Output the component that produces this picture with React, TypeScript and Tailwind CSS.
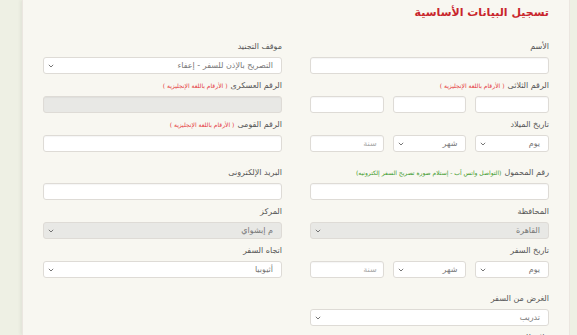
import React from "react";

const font = { fontFamily: '"DejaVu Sans", "Noto Sans", sans-serif' };

const Chevron = () => (
    <svg width="6" height="4" viewBox="0 0 6 4" className="shrink-0">
        <path d="M0.8 0.8 L3 3 L5.2 0.8" fill="none" stroke="#666" strokeWidth="0.9" />
    </svg>
);

const Label = ({ text, note, noteColor }: { text: string; note?: string; noteColor?: string }) => (
    <div className="h-[12px] leading-[12px] text-[8px] text-[#555] mb-[4px] whitespace-nowrap">
        {text}
        {note && <span className={`text-[6px] mr-[3px] ${noteColor}`}>{note}</span>}
    </div>
);

const Input = ({ placeholder, disabled }: { placeholder?: string; disabled?: boolean }) => (
    <div className={`h-[17px] rounded-[3px] border border-[#dedbd6] px-[6px] text-[8px] leading-[15px] text-[#aaa] shadow-[inset_0_1px_1px_rgba(0,0,0,0.04)] ${disabled ? "bg-[#e8e8e5]" : "bg-white"}`}>
        {placeholder}
    </div>
);

const Select = ({ value, disabled }: { value: string; disabled?: boolean }) => (
    <div className={`h-[17px] rounded-[3px] border border-[#dedbd6] pr-[8px] pl-[4px] flex items-center justify-between text-[8px] text-[#777] ${disabled ? "bg-[#e8e8e5]" : "bg-white"}`}>
        <span>{value}</span>
        <Chevron />
    </div>
);

const DateRow = () => (
    <div className="grid grid-cols-3 gap-[9px]">
        <Select value="يوم" />
        <Select value="شهر" />
        <Input placeholder="سنة" />
    </div>
);

const red = "text-[#e53a40]";
const green = "text-[#3c9a2c]";
const enNote = "( الأرقام باللغة الإنجليزية )";

export default function App() {
    return (
        <div style={font} className="w-[577px] h-[335px] overflow-hidden bg-[#eef0e4] pl-[22px] pr-[7px]">
            <div dir="rtl" className="h-full bg-[#f8f7f1] border-l border-r border-[#ebe6e0] shadow-[-2px_0_3px_rgba(0,0,0,0.05)] px-[20px] pt-[6px]">
                <div className="text-[11px] font-bold text-[#c9252c] leading-[14px] mb-[21px]">تسجيل البيانات الأساسية</div>
                <div className="grid grid-cols-2 gap-x-[28px]">
                    <div className="mb-[6px]"><Label text="الأسم" /><Input /></div>
                    <div className="mb-[6px]"><Label text="موقف التجنيد" /><Select value="التصريح بالإذن للسفر - إعفاء" /></div>

                    <div className="mb-[6px]">
                        <Label text="الرقم الثلاثى" note={enNote} noteColor={red} />
                        <div className="grid grid-cols-3 gap-[9px]"><Input /><Input /><Input /></div>
                    </div>
                    <div className="mb-[6px]"><Label text="الرقم العسكرى" note={enNote} noteColor={red} /><Input disabled /></div>

                    <div className="mb-[15px]"><Label text="تاريخ الميلاد" /><DateRow /></div>
                    <div className="mb-[15px]"><Label text="الرقم القومى" note={enNote} noteColor={red} /><Input /></div>

                    <div className="mb-[6px]">
                        <Label text="رقم المحمول" note="(التواصل واتس أب - إستلام صورة تصريح السفر إلكترونيه)" noteColor={green} />
                        <Input />
                    </div>
                    <div className="mb-[6px]"><Label text="البريد الإلكترونى" /><Input /></div>

                    <div className="mb-[6px]"><Label text="المحافظة" /><Select value="القاهرة" disabled /></div>
                    <div className="mb-[6px]"><Label text="المركز" /><Select value="م إبشواي" disabled /></div>

                    <div className="mb-[15px]"><Label text="تاريخ السفر" /><DateRow /></div>
                    <div className="mb-[15px]"><Label text="اتجاه السفر" /><Select value="أثيوبيا" /></div>

                    <div className="mb-[6px]"><Label text="الغرض من السفر" /><Select value="تدريب" /></div>
                    <div />

                    <div><Label text="ملاحظات" /><Input /></div>
                </div>
            </div>
        </div>
    );
}
